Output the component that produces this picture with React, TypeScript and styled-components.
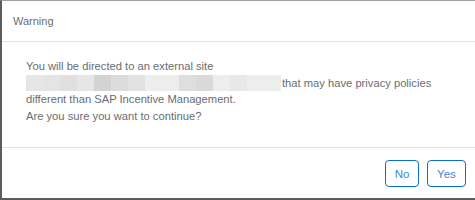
import React from 'react'
import styled, { createGlobalStyle } from 'styled-components'

const GlobalStyle = createGlobalStyle`
  html, body {
    margin: 0;
    padding: 0;
    background: #ffffff;
  }
  body {
    font-family: "Liberation Sans", Arial, sans-serif;
  }
`

const Dialog = styled.div`
  box-sizing: border-box;
  width: 475px;
  height: 200px;
  display: flex;
  flex-direction: column;
  background: #ffffff;
  border-left: 2px solid #5c5c5c;
  border-top: 1px solid #a0a0a0;
  border-bottom: 2px solid #5c5c5c;
`

const Header = styled.div`
  height: 40px;
  display: flex;
  align-items: center;
  padding-left: 11px;
  border-bottom: 1px solid #e4e4e4;
  font-size: 11px;
  color: #6a6d70;
`

const Body = styled.div`
  flex: 1;
  padding: 16px 0 0 24px;
  font-size: 11.2px;
  line-height: 16.5px;
  color: #6a6d70;
`

const Line = styled.div`
  display: flex;
  align-items: center;
  white-space: nowrap;
`

const Redacted = styled.span`
  display: inline-flex;
  height: 16px;
  margin-right: 1px;
`

const Block = styled.span<{ $shade: string }>`
  width: 17px;
  height: 100%;
  background: ${p => p.$shade};
`

const Footer = styled.div`
  height: 50px;
  display: flex;
  align-items: center;
  justify-content: flex-end;
  gap: 8px;
  padding-right: 9px;
  border-top: 1px solid #e4e4e4;
`

const Button = styled.button<{ $width: number }>`
  box-sizing: border-box;
  width: ${p => p.$width}px;
  height: 27px;
  margin-top: 1px;
  padding: 0;
  background: #ffffff;
  border: 1px solid #0a6ed1;
  border-radius: 4px;
  color: #3d86d6;
  font-family: "Liberation Sans", Arial, sans-serif;
  font-size: 11.5px;
  cursor: pointer;
`

const shades = [
  '#e6e6e6', '#e3e4e3', '#dfe0df', '#e6e6e6', '#d3d3d3',
  '#dcdcdc', '#e2e2e2', '#eceeed', '#eceeed', '#dedede',
  '#d9d9d9', '#eceeed', '#e8e8e8', '#eceeed', '#eceeed',
]

export default function App() {
  return (
    <>
      <GlobalStyle />
      <Dialog>
        <Header>Warning</Header>
        <Body>
          <Line>You will be directed to an external site</Line>
          <Line>
            <Redacted>
              {shades.map((s, i) => (
                <Block key={i} $shade={s} />
              ))}
            </Redacted>
            that may have privacy policies
          </Line>
          <Line>different than SAP Incentive Management.</Line>
          <Line>Are you sure you want to continue?</Line>
        </Body>
        <Footer>
          <Button $width={34}>No</Button>
          <Button $width={39}>Yes</Button>
        </Footer>
      </Dialog>
    </>
  )
}
